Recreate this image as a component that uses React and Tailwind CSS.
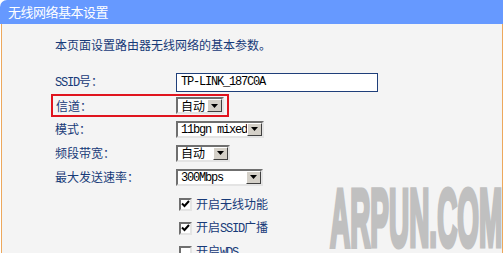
const cjk = "font-['Noto_Sans_CJK_SC','Noto_Sans',sans-serif]";
const mono = "font-['Liberation_Mono',monospace] tracking-[-1.2px]";

function Arrow() {
  return (
    <div className="flex h-full w-[15px] shrink-0 items-center justify-center border border-t-white border-l-white border-r-[#404040] border-b-[#404040] bg-[#d4d0c8]">
      <svg width="7" height="4" viewBox="0 0 7 4">
        <path d="M0 0h7L3.5 4z" fill="#000" />
      </svg>
    </div>
  );
}

function Select({ width, children }) {
  return (
    <div
      className={`flex h-[17px] items-center border-2 border-t-[#6f6f6f] border-l-[#6f6f6f] border-r-[#e4e4e4] border-b-[#e4e4e4] bg-white ${width}`}
    >
      <span className="flex-1 pl-[3px] text-[12px] leading-none text-black">{children}</span>
      <Arrow />
    </div>
  );
}

function Row({ label, children }) {
  return (
    <div className="flex h-[24px] items-center pl-[53px]">
      <div className="w-[121px] text-[12px] leading-none text-[#173a78]">{label}</div>
      {children}
    </div>
  );
}

function Check({ checked, children }) {
  return (
    <div className="flex h-[24px] items-center pl-[177px]">
      <div className="flex h-[13px] w-[13px] items-center justify-center border-2 border-t-[#6f6f6f] border-l-[#6f6f6f] border-r-[#e4e4e4] border-b-[#e4e4e4] bg-white">
        {checked && (
          <svg width="9" height="8" viewBox="0 0 9 8">
            <path d="M1 3.5l2.5 2.5L8 1" stroke="#000" strokeWidth="2" fill="none" />
          </svg>
        )}
      </div>
      <span className="ml-[4px] text-[12px] leading-none text-[#173a78]">{children}</span>
    </div>
  );
}

export default function App() {
  return (
    <div className={`relative flex h-[253px] w-[503px] flex-col overflow-hidden bg-white ${cjk}`}>
      <div className="flex h-[24px] shrink-0 items-center rounded-tl-[7px] bg-[#6699ff] pl-[8px] text-[13px] tracking-[-0.5px] text-white">
        无线网络基本设置
      </div>
      <div className="ml-[1px] flex-1 border-l border-r border-[#eda85c] bg-[#f4f4f4]">
        <div className="pl-[53px] pt-[14px] text-[12px] leading-[14px] text-[#173a78]">
          本页面设置路由器无线网络的基本参数。
        </div>
        <div className="mt-[18px]">
          <Row label={<><span className={mono}>SSID</span>号：</>}>
            <div className="flex h-[19px] w-[202px] items-center border border-[#1f3f7a] bg-white pl-[4px]">
              <span className={`${mono} text-[12px] leading-none text-black`}>TP-LINK_187C0A</span>
            </div>
          </Row>
          <div className="ml-[49px] flex h-[23px] w-[178px] items-center border-2 border-[#e0141e]">
            <div className="w-[123px] pl-[3px] text-[12px] leading-none text-[#173a78]">信道：</div>
            <Select width="w-[48px]">自动</Select>
          </div>
          <Row label="模式：">
            <Select width="w-[88px]">
              <span className={mono}>11bgn mixed</span>
            </Select>
          </Row>
          <Row label="频段带宽：">
            <Select width="w-[54px]">自动</Select>
          </Row>
          <Row label="最大发送速率：">
            <Select width="w-[87px]">
              <span className={mono}>300Mbps</span>
            </Select>
          </Row>
          <div className="mt-[3px]">
            <Check checked>开启无线功能</Check>
            <Check checked>
              开启<span className={mono}>SSID</span>广播
            </Check>
            <Check>
              开启<span className={mono}>WDS</span>
            </Check>
          </div>
        </div>
      </div>
      <div className="pointer-events-none absolute left-[330px] top-[178px] origin-left scale-x-[0.345] whitespace-nowrap font-['Liberation_Sans',sans-serif] text-[81px] font-bold leading-none text-[#c0c0c0] [-webkit-text-stroke:5px_#c0c0c0]">
        ARPUN.COM
      </div>
    </div>
  );
}
